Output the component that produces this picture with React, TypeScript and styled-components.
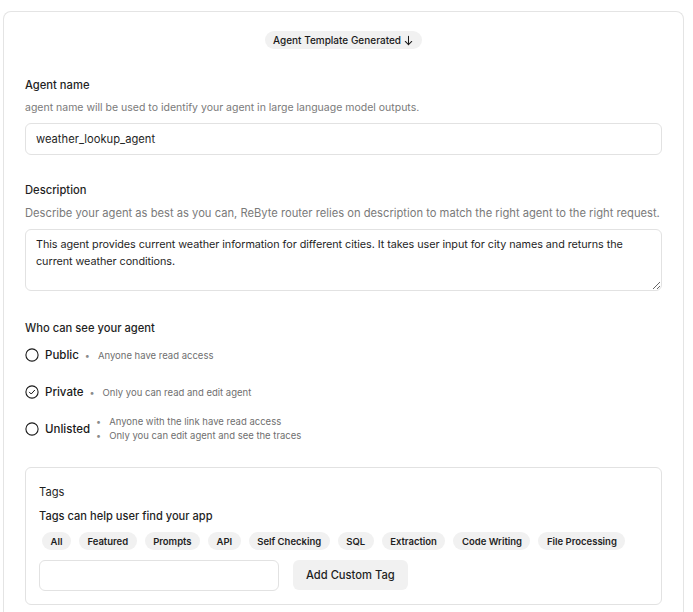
import React from "react";
import styled, { createGlobalStyle } from "styled-components";

const Global = createGlobalStyle`
  html, body { margin: 0; padding: 0; background: #ffffff; }
  body { font-family: Inter, "Noto Sans", sans-serif; color: #1f1f1f; }
  * { box-sizing: border-box; }
`;

const Page = styled.div`
  padding: 11px 9px 0 3px;
  height: 612px;
  overflow: hidden;
`;

const Card = styled.div`
  border: 1px solid #e4e4e4;
  border-bottom: none;
  border-radius: 8px 8px 0 0;
  padding: 19px 21px 40px;
  display: flex;
  flex-direction: column;
  height: 640px;
`;

const BadgeRow = styled.div`
  display: flex;
  justify-content: center;
`;

const Badge = styled.div`
  display: inline-flex;
  align-items: center;
  gap: 2px;
  height: 18px;
  padding: 0 8px;
  border-radius: 9px;
  background: #f1f1f1;
  font-size: 10px;
  font-weight: 500;
  color: #1a1a1a;
`;

const Label = styled.div<{ $top: number }>`
  margin-top: ${(p) => p.$top}px;
  font-size: 11.2px;
  line-height: 16px;
  font-weight: 500;
  color: #1f1f1f;
`;

const Hint = styled.div<{ $size: number }>`
  margin-top: 7px;
  font-size: ${(p) => p.$size}px;
  line-height: 16px;
  color: #7a7a7a;
`;

const TextInput = styled.input`
  margin-top: 7px;
  height: 32px;
  width: 100%;
  border: 1px solid #e2e2e2;
  border-radius: 6px;
  padding: 0 10px;
  font-family: inherit;
  font-size: 11.2px;
  color: #1f1f1f;
  outline: none;
  background: #fff;
`;

const TextArea = styled.textarea`
  margin-top: 8px;
  height: 62px;
  width: 100%;
  border: 1px solid #e2e2e2;
  border-radius: 6px;
  padding: 6px 2px 6px 10px;
  font-family: inherit;
  font-size: 10.8px;
  letter-spacing: -0.05px;
  line-height: 17px;
  color: #1f1f1f;
  outline: none;
  overflow: hidden;
  resize: vertical;
  display: block;
`;

const RadioList = styled.div`
  display: flex;
  flex-direction: column;
  margin-top: 7px;
`;

const RadioRow = styled.label<{ $gap: number }>`
  display: flex;
  align-items: center;
  min-height: 24px;
  margin-top: ${(p) => p.$gap}px;
`;

const RadioIcon = styled.svg`
  width: 14px;
  height: 14px;
  flex: none;
  margin-right: 6px;
`;

const RadioLabel = styled.span`
  font-size: 11.5px;
  font-weight: 500;
  color: #1a1a1a;
  margin-right: 6px;
`;

const Notes = styled.ul`
  margin: 0;
  padding: 0;
  list-style: none;
  display: flex;
  flex-direction: column;
  gap: 1px;
`;

const Note = styled.li`
  font-size: 9.5px;
  line-height: 13px;
  color: #6f6f6f;
  display: flex;
  align-items: center;
  &::before {
    content: "•";
    font-size: 9px;
    color: #8a8a8a;
    margin-right: 8px;
  }
`;

const TagsBox = styled.div`
  margin-top: 25px;
  border: 1px solid #e2e2e2;
  border-radius: 6px;
  padding: 16px 13px 13px;
  display: flex;
  flex-direction: column;
`;

const TagsTitle = styled.div`
  font-size: 11.2px;
  line-height: 16px;
  color: #1f1f1f;
`;

const TagsHint = styled.div`
  margin-top: 8px;
  font-size: 11.1px;
  line-height: 16px;
  font-weight: 500;
  color: #1f1f1f;
`;

const ChipRow = styled.div`
  display: flex;
  flex-wrap: wrap;
  gap: 8px;
  margin-top: 8px;
  padding-left: 3px;
`;

const Chip = styled.button`
  height: 18px;
  padding: 0 8.5px;
  border: none;
  border-radius: 9px;
  background: #f1f1f1;
  font-family: inherit;
  font-size: 9.5px;
  font-weight: 600;
  color: #1f1f1f;
  cursor: pointer;
`;

const AddRow = styled.div`
  display: flex;
  align-items: center;
  gap: 14px;
  margin-top: 10px;
`;

const TagInput = styled.input`
  width: 240px;
  height: 31px;
  border: 1px solid #e2e2e2;
  border-radius: 6px;
  outline: none;
  padding: 0 8px;
  font-family: inherit;
`;

const AddButton = styled.button`
  height: 30px;
  padding: 0 13px;
  margin-top: -1px;
  border: none;
  border-radius: 6px;
  background: #f1f1f1;
  font-family: inherit;
  font-size: 11.2px;
  font-weight: 500;
  color: #1f1f1f;
  cursor: pointer;
`;

const Radio = ({ checked }: { checked?: boolean }) => (
  <RadioIcon viewBox="0 0 14 14">
    <circle cx="7" cy="7" r="6.1" fill="none" stroke="#1a1a1a" strokeWidth="1.1" />
    {checked && (
      <path d="M4.4 7.2 L6.2 9 L9.6 5.3" fill="none" stroke="#1a1a1a" strokeWidth="1" strokeLinecap="round" strokeLinejoin="round" />
    )}
  </RadioIcon>
);

const tags = ["All", "Featured", "Prompts", "API", "Self Checking", "SQL", "Extraction", "Code Writing", "File Processing"];

const description =
  "This agent provides current weather information for different cities. It takes user input for city names and returns the\ncurrent weather conditions.";

export default function App() {
  return (
    <>
      <Global />
      <Page>
        <Card>
          <BadgeRow>
            <Badge>
              Agent Template Generated
              <svg width="11" height="11" viewBox="0 0 12 12">
                <path d="M6 1.5 V10.5 M2.5 7 L6 10.5 L9.5 7" fill="none" stroke="#1a1a1a" strokeWidth="1.1" strokeLinecap="round" strokeLinejoin="round" />
              </svg>
            </Badge>
          </BadgeRow>

          <Label $top={28}>Agent name</Label>
          <Hint $size={10.5}>agent name will be used to identify your agent in large language model outputs.</Hint>
          <TextInput defaultValue="weather_lookup_agent" />

          <Label $top={27}>Description</Label>
          <Hint $size={11.2}>Describe your agent as best as you can, ReByte router relies on description to match the right agent to the right request.</Hint>
          <TextArea defaultValue={description} />

          <Label $top={29}>Who can see your agent</Label>
          <RadioList>
            <RadioRow $gap={0}>
              <Radio />
              <RadioLabel>Public</RadioLabel>
              <Notes>
                <Note>Anyone have read access</Note>
              </Notes>
            </RadioRow>
            <RadioRow $gap={13}>
              <Radio checked />
              <RadioLabel>Private</RadioLabel>
              <Notes>
                <Note>Only you can read and edit agent</Note>
              </Notes>
            </RadioRow>
            <RadioRow $gap={11}>
              <Radio />
              <RadioLabel>Unlisted</RadioLabel>
              <Notes>
                <Note>Anyone with the link have read access</Note>
                <Note>Only you can edit agent and see the traces</Note>
              </Notes>
            </RadioRow>
          </RadioList>

          <TagsBox>
            <TagsTitle>Tags</TagsTitle>
            <TagsHint>Tags can help user find your app</TagsHint>
            <ChipRow>
              {tags.map((t) => (
                <Chip key={t}>{t}</Chip>
              ))}
            </ChipRow>
            <AddRow>
              <TagInput />
              <AddButton>Add Custom Tag</AddButton>
            </AddRow>
          </TagsBox>
        </Card>
      </Page>
    </>
  );
}
